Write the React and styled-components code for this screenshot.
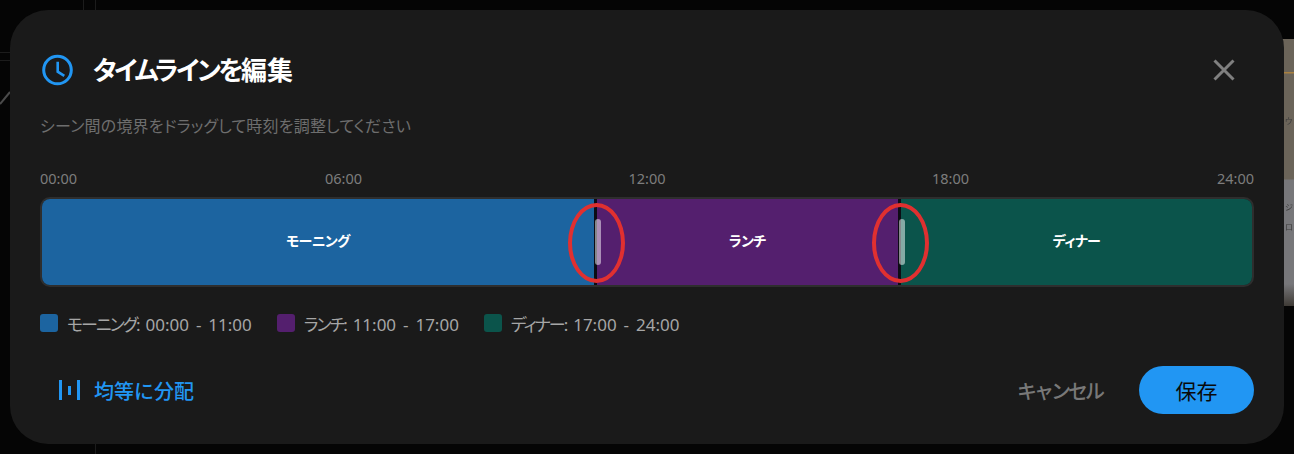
import React from "react";
import styled, { createGlobalStyle } from "styled-components";

const segments = [
  { name: "モーニング", start: "00:00", end: "11:00", hours: 11, color: "#1c64a0" },
  { name: "ランチ", start: "11:00", end: "17:00", hours: 6, color: "#541f6e" },
  { name: "ディナー", start: "17:00", end: "24:00", hours: 7, color: "#0b544b" },
];

const ticks = ["00:00", "06:00", "12:00", "18:00", "24:00"];

function App() {
  return (
    <Page>
      <GlobalStyle />
      <Backdrop>
        <svg width="1294" height="454" fill="none" stroke="#1c1c1c">
          <path d="M83.5 0V10M95.5 0V10M95.5 444V454M0 52.5H10M0 60.5H10" />
          <path d="M0 104L10 92" stroke="#4a4a4a" strokeWidth="2" />
        </svg>
        <SidePhoto>
          <PhotoNote $top={76}>ウ</PhotoNote>
          <PhotoNote $top={162}>ジ</PhotoNote>
          <PhotoNote $top={182}>ロ</PhotoNote>
        </SidePhoto>
      </Backdrop>
      <Dialog>
        <Header>
          <svg width="34" height="34" viewBox="0 0 34 34" fill="none" stroke="#2196f3" strokeWidth="3">
            <circle cx="17.5" cy="17" r="13.8" />
            <path d="M17.7 8.7V18.7l6.6 4.2" strokeWidth="2.6" />
          </svg>
          <Title>
            タイムラインを<TitleKanji>編集</TitleKanji>
          </Title>
          <CloseButton>
            <svg width="24" height="24" viewBox="0 0 24 24" stroke="#808080" strokeWidth="3">
              <path d="M2.5 2.5l19 19M21.5 2.5l-19 19" />
            </svg>
          </CloseButton>
        </Header>
        <Description>シーン間の境界をドラッグして時刻を調整してください</Description>
        <Ticks>
          {ticks.map((t) => (
            <Tick key={t}>{t}</Tick>
          ))}
        </Ticks>
        <Bar>
          {segments.map((s, i) => (
            <Segment key={s.name} $color={s.color} $hours={s.hours} $divider={i > 0}>
              {s.name}
              {i > 0 && (
                <>
                  <Handle />
                  <Annotation />
                </>
              )}
            </Segment>
          ))}
        </Bar>
        <Legend>
          {segments.map((s) => (
            <LegendItem key={s.name}>
              <Swatch $color={s.color} />
              <span>
                <LegendName>{s.name}:</LegendName> {s.start} - {s.end}
              </span>
            </LegendItem>
          ))}
        </Legend>
        <Footer>
          <TextButton $blue>
            <svg width="24" height="24" viewBox="0 0 24 24" stroke="#2196f3" strokeWidth="3">
              <path d="M2.5 2v20M11.5 8v9M20.5 2v20" />
            </svg>
            均等に分配
          </TextButton>
          <Actions>
            <TextButton>キャンセル</TextButton>
            <SaveButton>保存</SaveButton>
          </Actions>
        </Footer>
      </Dialog>
    </Page>
  );
}

const GlobalStyle = createGlobalStyle`
  html, body {
    margin: 0;
    padding: 0;
    background: #000;
  }
  body {
    font-family: "Noto Sans", "Noto Sans CJK JP", sans-serif;
    font-feature-settings: "palt";
  }
`;

const Page = styled.div`
  position: relative;
  width: 1294px;
  height: 454px;
  padding: 10px;
  box-sizing: border-box;
  overflow: hidden;
  background: #050505;
`;

const Backdrop = styled.div`
  position: absolute;
  inset: 0;
`;

const SidePhoto = styled.div`
  position: absolute;
  top: 39px;
  height: 267px;
  right: 0;
  width: 14px;
  overflow: hidden;
  background: linear-gradient(
    #6b6459 0%,
    #6b6459 33px,
    #a8803f 33px,
    #a8803f 34px,
    #6b6459 35px,
    #6b6459 140px,
    #77777a 141px,
    #77777a 245px,
    #3f3b36 100%
  );
`;

const PhotoNote = styled.span`
  position: absolute;
  left: 5px;
  top: ${(p) => p.$top}px;
  color: #3a3a3a;
  font-size: 8px;
  line-height: 12px;
  filter: blur(0.5px);
`;

const Dialog = styled.div`
  position: relative;
  height: 434px;
  box-sizing: border-box;
  padding: 30px;
  background: #1a1a1a;
  border-radius: 38px;
  display: flex;
  flex-direction: column;
`;

const Header = styled.div`
  display: flex;
  align-items: center;
  gap: 19px;
  height: 60px;
`;

const Title = styled.h2`
  margin: 0;
  color: #fff;
  font-size: 26px;
  font-weight: 700;
  line-height: 1;
  letter-spacing: -2.4px;
`;

const TitleKanji = styled.span`
  letter-spacing: 0;
`;

const CloseButton = styled.button`
  margin-left: auto;
  margin-right: 18px;
  padding: 0;
  display: flex;
  border: 0;
  background: none;
`;

const Description = styled.p`
  margin: 14px 0 0;
  color: #6e6e6e;
  font-size: 16px;
  line-height: 24px;
  letter-spacing: 0.2px;
`;

const Ticks = styled.div`
  margin-top: 30px;
  display: flex;
  justify-content: space-between;
  color: #7d7d7d;
  font-size: 14.5px;
  line-height: 20px;
`;

const Tick = styled.span`
  width: 0;
  display: flex;
  justify-content: center;

  &:first-child {
    justify-content: flex-start;
  }
  &:last-child {
    justify-content: flex-end;
  }
`;

const Bar = styled.div`
  margin-top: 9px;
  height: 90px;
  box-sizing: border-box;
  display: flex;
  overflow: hidden;
  border: 2px solid #2e2e2e;
  border-radius: 10px;
`;

const Segment = styled.div`
  position: relative;
  flex: ${(p) => p.$hours} 0 0;
  display: flex;
  align-items: center;
  justify-content: center;
  padding-bottom: 5px;
  box-sizing: border-box;
  background: ${(p) => p.$color};
  color: #fff;
  font-size: 14px;
  font-weight: 700;
  letter-spacing: -0.6px;
  border-left: ${(p) => (p.$divider ? "3px solid #0c0c14" : "0")};
`;

const Handle = styled.div`
  position: absolute;
  left: -2px;
  top: 20px;
  width: 6px;
  height: 46px;
  border-radius: 3px;
  background: rgba(255, 255, 255, 0.5);
`;

const Annotation = styled.div`
  position: absolute;
  left: -29px;
  top: 4px;
  width: 49px;
  height: 72px;
  border: 4px solid #e03030;
  border-radius: 50%;
`;

const Legend = styled.div`
  margin-top: 26px;
  display: flex;
  gap: 25px;
`;

const LegendItem = styled.div`
  display: flex;
  align-items: center;
  gap: 9px;
  color: #a6a6a6;
  font-size: 17px;
  line-height: 24px;
  word-spacing: 2.5px;
`;

const LegendName = styled.span`
  letter-spacing: -2px;
`;

const Swatch = styled.div`
  width: 18px;
  height: 18px;
  margin-top: -4px;
  border-radius: 3px;
  background: ${(p) => p.$color};
`;

const Footer = styled.div`
  margin-top: auto;
  display: flex;
  align-items: center;
  justify-content: space-between;
`;

const Actions = styled.div`
  display: flex;
  align-items: center;
  gap: 37px;
`;

const TextButton = styled.button`
  display: flex;
  align-items: center;
  gap: 12px;
  padding: 0;
  margin-left: ${(p) => (p.$blue ? "18px" : "0")};
  border: 0;
  background: none;
  color: ${(p) => (p.$blue ? "#2196f3" : "#787878")};
  font-family: inherit;
  font-size: 20px;
  font-weight: 500;
  letter-spacing: ${(p) => (p.$blue ? "0" : "-3px")};
`;

const SaveButton = styled.button`
  width: 115px;
  height: 48px;
  border: 0;
  border-radius: 24px;
  background: #2196f3;
  color: #0a0a0a;
  font-family: inherit;
  font-size: 21px;
  font-weight: 400;
`;

export default App;
